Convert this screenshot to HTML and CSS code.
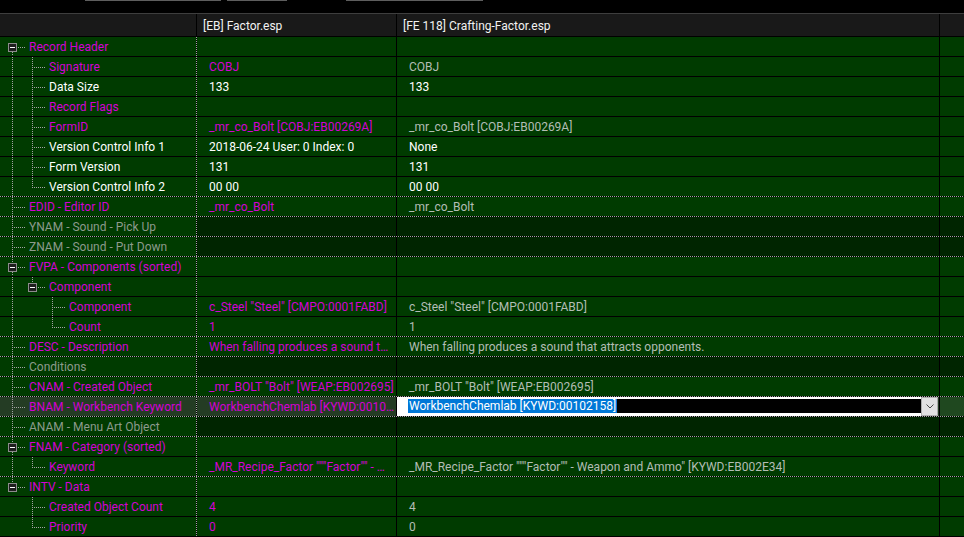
FILE: index.html
```html
<!DOCTYPE html>
<html>
<head>
<meta charset="utf-8">
<link rel="stylesheet" href="styles.css">
</head>
<body>
<div class="topbar"><span class="seg s1"></span><span class="seg s2"></span><span class="seg s3"></span></div>
<div class="header"><div></div><div>[EB] Factor.esp</div><div>[FE 118] Crafting-Factor.esp</div><div></div></div>

<div class="row"><div class="tree"><span class="c bx first"><i class="box"></i></span><span class="lbl mag">Record Header</span></div><div class="cell"></div><div class="cell"></div><div class="cell"></div></div>
<div class="row"><div class="tree"><span class="u v"></span><span class="c tee"></span><span class="lbl mag">Signature</span></div><div class="cell mag">COBJ</div><div class="cell gry">COBJ</div><div class="cell"></div></div>
<div class="row"><div class="tree"><span class="u v"></span><span class="c tee"></span><span class="lbl wht">Data Size</span></div><div class="cell wht">133</div><div class="cell wht">133</div><div class="cell"></div></div>
<div class="row"><div class="tree"><span class="u v"></span><span class="c tee"></span><span class="lbl mag">Record Flags</span></div><div class="cell"></div><div class="cell"></div><div class="cell"></div></div>
<div class="row"><div class="tree"><span class="u v"></span><span class="c tee"></span><span class="lbl mag">FormID</span></div><div class="cell mag">_mr_co_Bolt [COBJ:EB00269A]</div><div class="cell gry">_mr_co_Bolt [COBJ:EB00269A]</div><div class="cell"></div></div>
<div class="row"><div class="tree"><span class="u v"></span><span class="c tee"></span><span class="lbl wht">Version Control Info 1</span></div><div class="cell wht">2018-06-24 User: 0 Index: 0</div><div class="cell wht">None</div><div class="cell"></div></div>
<div class="row"><div class="tree"><span class="u v"></span><span class="c tee"></span><span class="lbl wht">Form Version</span></div><div class="cell wht">131</div><div class="cell wht">131</div><div class="cell"></div></div>
<div class="row dot"><div class="tree"><span class="u v"></span><span class="c end"></span><span class="lbl wht">Version Control Info 2</span></div><div class="cell wht">00 00</div><div class="cell wht">00 00</div><div class="cell"></div></div>
<div class="row dot"><div class="tree"><span class="c tee"></span><span class="lbl mag">EDID - Editor ID</span></div><div class="cell mag">_mr_co_Bolt</div><div class="cell gry">_mr_co_Bolt</div><div class="cell"></div></div>
<div class="row dot empty"><div class="tree"><span class="c tee"></span><span class="lbl dim">YNAM - Sound - Pick Up</span></div><div class="cell"></div><div class="cell"></div><div class="cell"></div></div>
<div class="row dot empty"><div class="tree"><span class="c tee"></span><span class="lbl dim">ZNAM - Sound - Put Down</span></div><div class="cell"></div><div class="cell"></div><div class="cell"></div></div>
<div class="row"><div class="tree"><span class="c bx mid"><i class="box"></i></span><span class="lbl mag">FVPA - Components (sorted)</span></div><div class="cell"></div><div class="cell"></div><div class="cell"></div></div>
<div class="row"><div class="tree"><span class="u v"></span><span class="c bx last"><i class="box"></i></span><span class="lbl mag">Component</span></div><div class="cell"></div><div class="cell"></div><div class="cell"></div></div>
<div class="row"><div class="tree"><span class="u v"></span><span class="u"></span><span class="c tee"></span><span class="lbl mag">Component</span></div><div class="cell mag">c_Steel "Steel" [CMPO:0001FABD]</div><div class="cell gry">c_Steel "Steel" [CMPO:0001FABD]</div><div class="cell"></div></div>
<div class="row dot"><div class="tree"><span class="u v"></span><span class="u"></span><span class="c end"></span><span class="lbl mag">Count</span></div><div class="cell mag">1</div><div class="cell gry">1</div><div class="cell"></div></div>
<div class="row dot"><div class="tree"><span class="c tee"></span><span class="lbl mag">DESC - Description</span></div><div class="cell mag">When falling produces a sound that attracts opponents.</div><div class="cell gry">When falling produces a sound that attracts opponents.</div><div class="cell"></div></div>
<div class="row dot empty"><div class="tree"><span class="c tee"></span><span class="lbl dim">Conditions</span></div><div class="cell"></div><div class="cell"></div><div class="cell"></div></div>
<div class="row dot"><div class="tree"><span class="c tee"></span><span class="lbl mag">CNAM - Created Object</span></div><div class="cell mag">_mr_BOLT "Bolt" [WEAP:EB002695]</div><div class="cell gry">_mr_BOLT "Bolt" [WEAP:EB002695]</div><div class="cell"></div></div>
<div class="row dot sel"><div class="tree"><span class="c tee"></span><span class="lbl mag">BNAM - Workbench Keyword</span></div><div class="cell mag">WorkbenchChemlab [KYWD:00102158]</div><div class="cell combo-cell"><div class="combo"><div class="edit"><span class="hl">WorkbenchChemlab [KYWD:00102158]</span></div><div class="btn"><svg width="8" height="5" viewBox="0 0 8 5"><polyline points="0.5,0.5 4,4 7.5,0.5" fill="none" stroke="#4a4a4a" stroke-width="1"/></svg></div></div></div><div class="cell c4"></div></div>
<div class="row dot empty"><div class="tree"><span class="c tee"></span><span class="lbl dim">ANAM - Menu Art Object</span></div><div class="cell"></div><div class="cell"></div><div class="cell"></div></div>
<div class="row"><div class="tree"><span class="c bx mid"><i class="box"></i></span><span class="lbl mag">FNAM - Category (sorted)</span></div><div class="cell"></div><div class="cell"></div><div class="cell"></div></div>
<div class="row dot"><div class="tree"><span class="u v"></span><span class="c end"></span><span class="lbl mag">Keyword</span></div><div class="cell mag">_MR_Recipe_Factor """Factor"" - Weapon and Ammo" [KYWD:EB002E34]</div><div class="cell gry">_MR_Recipe_Factor """Factor"" - Weapon and Ammo" [KYWD:EB002E34]</div><div class="cell"></div></div>
<div class="row"><div class="tree"><span class="c bx last"><i class="box"></i></span><span class="lbl mag">INTV - Data</span></div><div class="cell"></div><div class="cell"></div><div class="cell"></div></div>
<div class="row"><div class="tree"><span class="u"></span><span class="c tee"></span><span class="lbl mag">Created Object Count</span></div><div class="cell mag">4</div><div class="cell gry">4</div><div class="cell"></div></div>
<div class="row"><div class="tree"><span class="u"></span><span class="c end"></span><span class="lbl mag">Priority</span></div><div class="cell mag">0</div><div class="cell gry">0</div><div class="cell"></div></div>
</body>
</html>
```
FILE: styles.css
```css
html, body {
  margin: 0;
  padding: 0;
  background: #000;
}
body {
  width: 964px;
  height: 537px;
  overflow: hidden;
  font-family: Roboto, "Liberation Sans", sans-serif;
  font-size: 12px;
  --vd: repeating-linear-gradient(to bottom, #a3a3a3 0 1px, transparent 1px 2px);
  --hd: repeating-linear-gradient(to right, #a3a3a3 0 1px, transparent 1px 2px);
}
.topbar {
  height: 13px;
  display: flex;
  align-items: flex-start;
}
.seg {
  height: 1px;
  background: #5e5e5e;
}
.s1 { margin-left: 85px; width: 136px; }
.s2 { margin-left: 6px; width: 60px; }
.s3 { margin-left: 59px; width: 137px; }

.header {
  display: grid;
  grid-template-columns: 196px 199px 542px 1fr;
  column-gap: 1px;
  background: #000;
  border-top: 1px solid #3e3e3e;
  padding-bottom: 1px;
}
.header > div {
  background: #191919;
  height: 22px;
  box-sizing: border-box;
  padding-top: 2px;
  line-height: 21px;
  padding-left: 6px;
  color: #f2f2f2;
  white-space: nowrap;
  overflow: hidden;
}

.row {
  display: grid;
  grid-template-columns: 196px 199px 542px 1fr;
  column-gap: 1px;
  height: 20px;
  box-sizing: border-box;
  padding-bottom: 1px;
  background:
    repeating-linear-gradient(to bottom, #a3a3a3 0 1px, #000 1px 2px) 196px 0 / 1px 100% no-repeat,
    #000;
}
.row.dot {
  background:
    repeating-linear-gradient(to right, #a3a3a3 0 1px, #000 1px 2px) 0 100% / 100% 1px no-repeat,
    repeating-linear-gradient(to bottom, #a3a3a3 0 1px, #000 1px 2px) 196px 0 / 1px 100% no-repeat,
    #000;
}
.row > * {
  background-color: #003b00;
  height: 19px;
  box-sizing: border-box;
  line-height: 20px;
  overflow: hidden;
  white-space: nowrap;
}
.cell {
  padding: 0 2px 0 12px;
  text-overflow: ellipsis;
}
.row.empty > .cell { background-color: #002500; }
.row.sel > * { background-color: #243c24; }
.row.sel > .c4 { background-color: #1f481f; }

.tree {
  display: flex;
}
.u {
  flex: none;
  width: 20px;
  height: 19px;
}
.u.v {
  background: var(--vd) 12px 0 / 1px 100% no-repeat;
}
.c {
  flex: none;
  width: 26px;
  height: 19px;
  display: block;
}
.c.tee {
  background:
    var(--vd) 12px 0 / 1px 100% no-repeat,
    var(--hd) 14px 10px / 12px 1px no-repeat;
}
.c.end {
  background:
    var(--vd) 12px 0 / 1px 11px no-repeat,
    var(--hd) 14px 10px / 12px 1px no-repeat;
}
.c.bx.first {
  background:
    var(--vd) 12px 15px / 1px 4px no-repeat,
    var(--hd) 18px 10px / 8px 1px no-repeat;
}
.c.bx.mid {
  background:
    var(--vd) 12px 0 / 1px 6px no-repeat,
    var(--vd) 12px 15px / 1px 4px no-repeat,
    var(--hd) 18px 10px / 8px 1px no-repeat;
}
.c.bx.last {
  background:
    var(--vd) 12px 0 / 1px 6px no-repeat,
    var(--hd) 18px 10px / 8px 1px no-repeat;
}
.box {
  display: block;
  width: 9px;
  height: 9px;
  box-sizing: border-box;
  margin: 6px 0 0 8px;
  border: 1px solid #8c8c8c;
  background: #1e1e1e;
}
.box::before {
  content: "";
  display: block;
  width: 5px;
  height: 1px;
  margin: 3px 0 0 1px;
  background: #fff;
}
.lbl {
  margin-left: 3px;
}

.mag { color: #d400d4; }
.wht { color: #ffffff; }
.dim { color: #8d9a8d; }
.gry { color: #b3bdb5; }

.combo-cell {
  padding: 0;
}
.combo {
  display: flex;
  width: 541px;
  height: 19px;
  background: #fff;
}
.edit {
  flex: 1;
  margin: 2px 0 3px 11px;
  background: #000;
  height: 14px;
  line-height: 15px;
  overflow: hidden;
}
.hl {
  display: inline-block;
  height: 14px;
  background: #0078d7;
  color: #fff;
  padding: 0 1px;
}
.btn {
  flex: none;
  width: 17px;
  height: 19px;
  box-sizing: border-box;
  border: 1px solid #adadad;
  background: #e1e1e1;
  display: flex;
  align-items: center;
  justify-content: center;
}
```
